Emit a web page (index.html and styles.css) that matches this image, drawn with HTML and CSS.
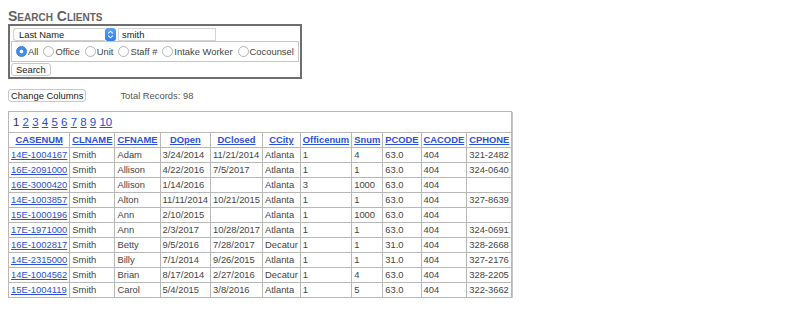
FILE: index.html
```html
<!DOCTYPE html>
<html lang="en">
<head>
    <meta charset="UTF-8">
    <title>Search Clients</title>
    <link rel="stylesheet" href="styles.css">
</head>
<body>
<h3 class="title">Search Clients</h3>

<form class="search-box">
    <div class="search-row">
        <span class="select-wrap">
            <select class="field-select">
                <option>Last Name</option>
                <option>First Name</option>
                <option>Case #</option>
            </select>
            <span class="select-arrow">
                <svg width="7" height="9" viewBox="0 0 7 9"><path d="M1.2 3.4 3.5 1.2 5.8 3.4M1.2 5.6 3.5 7.8 5.8 5.6" fill="none" stroke="#fff" stroke-width="1.1"/></svg>
            </span>
        </span>
        <input type="text" class="field-input" value="smith">
    </div>
    <div class="scope">
        <label><input type="radio" name="scope" checked>All</label>
        <label><input type="radio" name="scope">Office</label>
        <label><input type="radio" name="scope">Unit</label>
        <label><input type="radio" name="scope">Staff #</label>
        <label><input type="radio" name="scope">Intake Worker</label>
        <label><input type="radio" name="scope">Cocounsel</label>
    </div>
    <button type="button" class="btn btn-search">Search</button>
</form>

<div class="toolbar">
    <button type="button" class="btn btn-columns">Change Columns</button>
    <span class="total">Total Records: 98</span>
</div>

<table class="results">
    <tr>
        <td colspan="11" class="pager">1 <a href="#">2</a> <a href="#">3</a> <a href="#">4</a> <a href="#">5</a> <a href="#">6</a> <a href="#">7</a> <a href="#">8</a> <a href="#">9</a> <a href="#">10</a></td>
    </tr>
    <tr>
        <th><a href="#">CASENUM</a></th>
        <th><a href="#">CLNAME</a></th>
        <th><a href="#">CFNAME</a></th>
        <th><a href="#">DOpen</a></th>
        <th><a href="#">DClosed</a></th>
        <th><a href="#">CCity</a></th>
        <th><a href="#">Officenum</a></th>
        <th><a href="#">Snum</a></th>
        <th><a href="#">PCODE</a></th>
        <th><a href="#">CACODE</a></th>
        <th><a href="#">CPHONE</a></th>
    </tr>
    <tr><td><a href="#">14E-1004167</a></td><td>Smith</td><td>Adam</td><td>3/24/2014</td><td>11/21/2014</td><td>Atlanta</td><td>1</td><td>4</td><td>63.0</td><td>404</td><td>321-2482</td></tr>
    <tr><td><a href="#">16E-2091000</a></td><td>Smith</td><td>Allison</td><td>4/22/2016</td><td>7/5/2017</td><td>Atlanta</td><td>1</td><td>1</td><td>63.0</td><td>404</td><td>324-0640</td></tr>
    <tr><td><a href="#">16E-3000420</a></td><td>Smith</td><td>Allison</td><td>1/14/2016</td><td></td><td>Atlanta</td><td>3</td><td>1000</td><td>63.0</td><td>404</td><td></td></tr>
    <tr><td><a href="#">14E-1003857</a></td><td>Smith</td><td>Alton</td><td>11/11/2014</td><td>10/21/2015</td><td>Atlanta</td><td>1</td><td>1</td><td>63.0</td><td>404</td><td>327-8639</td></tr>
    <tr><td><a href="#">15E-1000196</a></td><td>Smith</td><td>Ann</td><td>2/10/2015</td><td></td><td>Atlanta</td><td>1</td><td>1000</td><td>63.0</td><td>404</td><td></td></tr>
    <tr><td><a href="#">17E-1971000</a></td><td>Smith</td><td>Ann</td><td>2/3/2017</td><td>10/28/2017</td><td>Atlanta</td><td>1</td><td>1</td><td>63.0</td><td>404</td><td>324-0691</td></tr>
    <tr><td><a href="#">16E-1002817</a></td><td>Smith</td><td>Betty</td><td>9/5/2016</td><td>7/28/2017</td><td>Decatur</td><td>1</td><td>1</td><td>31.0</td><td>404</td><td>328-2668</td></tr>
    <tr><td><a href="#">14E-2315000</a></td><td>Smith</td><td>Billy</td><td>7/1/2014</td><td>9/26/2015</td><td>Atlanta</td><td>1</td><td>1</td><td>31.0</td><td>404</td><td>327-2176</td></tr>
    <tr><td><a href="#">14E-1004562</a></td><td>Smith</td><td>Brian</td><td>8/17/2014</td><td>2/27/2016</td><td>Decatur</td><td>1</td><td>4</td><td>63.0</td><td>404</td><td>328-2205</td></tr>
    <tr><td><a href="#">15E-1004119</a></td><td>Smith</td><td>Carol</td><td>5/4/2015</td><td>3/8/2016</td><td>Atlanta</td><td>1</td><td>5</td><td>63.0</td><td>404</td><td>322-3662</td></tr>
</table>
</body>
</html>
```

FILE: styles.css
```css
:root {
    --text-color: #444;
    --link-color: #2b4fd6;
    --line-color: #b8b8b8;
    --radio-blue: #3b8ff3;
}

body {
    margin: 8px;
    font-family: 'Liberation Sans', Arial, sans-serif;
    font-size: 9.4px;
    color: var(--text-color);
    background: #fff;
}

a {
    color: var(--link-color);
}

.title {
    margin: 0;
    font-size: 14px;
    line-height: 16px;
    font-weight: bold;
    font-variant: small-caps;
    color: #636363;
}

/* search form */
.search-box {
    display: inline-block;
    margin: 0;
    padding: 2px 1px 1px 1px;
    border: 2px solid #6e6e6e;
}

.search-row {
    display: flex;
    align-items: center;
    gap: 2px;
    padding-left: 2px;
}

.select-wrap {
    display: inline-flex;
    height: 13px;
}

.field-select {
    appearance: none;
    width: 92px;
    height: 13px;
    margin: 0;
    padding: 0 0 0 5px;
    border: 1px solid #cfcfcf;
    border-right: none;
    border-radius: 3px 0 0 3px;
    background: #fff;
    font-family: inherit;
    font-size: 9.4px;
    color: #222;
}

.select-arrow {
    display: flex;
    align-items: center;
    justify-content: center;
    width: 11px;
    height: 13px;
    border-radius: 3px;
    background: linear-gradient(#5aa2f7, #2f7de8);
}

.field-input {
    width: 98px;
    height: 13px;
    box-sizing: border-box;
    margin: 0;
    padding: 0 3px;
    border: 1px solid #d4d4d4;
    font-family: inherit;
    font-size: 9.4px;
    color: #222;
}

.scope {
    display: flex;
    align-items: center;
    gap: 5px;
    height: 19px;
    padding: 0 4px;
    border: 1px solid #c6c6c6;
}

.scope label {
    display: inline-flex;
    align-items: center;
    gap: 1px;
    color: #444;
}

.scope input[type="radio"] {
    appearance: none;
    width: 11px;
    height: 11px;
    margin: 0;
    border: 1px solid #b5b5b5;
    border-radius: 50%;
    background: #fff;
}

.scope input[type="radio"]:checked {
    border-color: #2f7de0;
    background: radial-gradient(circle, #fff 0 1.6px, var(--radio-blue) 2.2px);
}

.btn {
    height: 13px;
    margin: 0;
    padding: 0 3px;
    border: 1px solid #c9c9c9;
    border-radius: 3px;
    background: #fff;
    font-family: inherit;
    font-size: 9.4px;
    line-height: 11px;
    color: #222;
}

.btn-search {
    margin: 1px 0 0 0;
    padding: 0 4px;
}

.btn-columns {
    padding: 0 2px;
}

.toolbar {
    display: flex;
    align-items: center;
    gap: 34px;
    margin-top: 10px;
}

.total {
    color: #555;
}

/* results */
.results {
    margin-top: 9px;
    border-collapse: collapse;
    border: 1px solid #9c9c9c;
    box-shadow: 1px 1px 0 #c8c8c8;
}

.results th,
.results td {
    padding: 1px 2px;
    line-height: 12px;
    border: 1px solid var(--line-color);
    text-align: left;
    white-space: nowrap;
}

.results th {
    text-align: center;
    font-weight: bold;
}

.results td.pager {
    padding: 3px 4px;
    font-size: 11.5px;
    line-height: 14px;
    color: #333;
}
```
